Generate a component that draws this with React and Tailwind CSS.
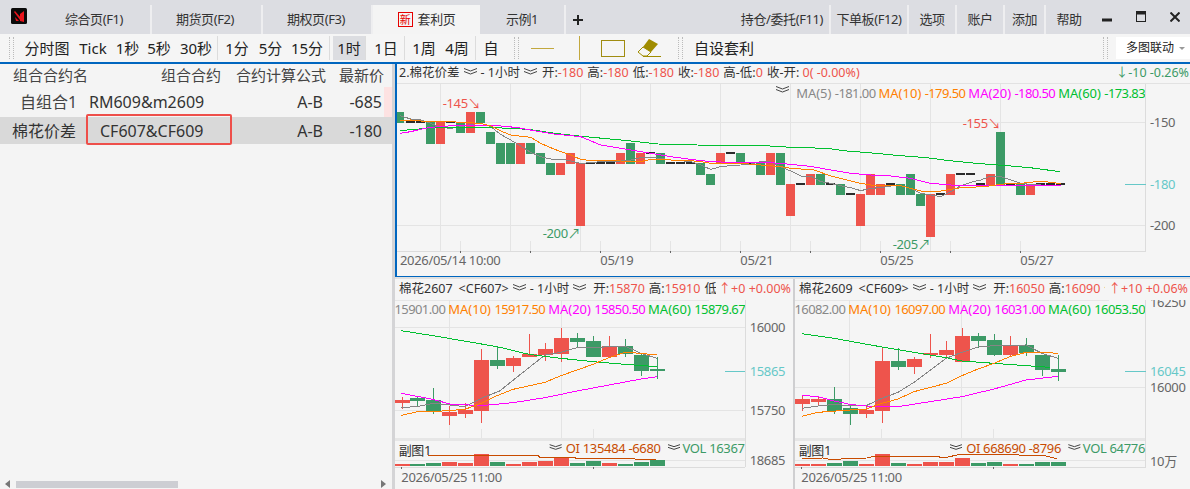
const RED = "#ee544c";
const GREEN = "#3c9a66";
const DASH = "#2b2b2b";
const GRID = "#e4e4e4";
const ORANGE = "#ff8000";
const MAGENTA = "#ff00ff";
const LIME = "#00c030";

const TABS = [
  { t: "综合页(F1)", w: "w-[111px] pr-[3px]" },
  { t: "期货页(F2)", w: "w-[111px] pr-[3px]" },
  { t: "期权页(F3)", w: "w-[110px] pr-[2px]" },
];
const MENU = [
  { t: "持仓/委托(F11)", w: "w-[96px]" },
  { t: "下单板(F12)", w: "w-[78px]" },
  { t: "选项", w: "w-[48px]" },
  { t: "账户", w: "w-[48px]" },
  { t: "添加", w: "w-[41px]" },
];
const PERIODS = [
  { t: "分时图", w: "w-[54px]" },
  { t: "Tick", w: "w-[38px]" },
  { t: "1秒", w: "w-[31px]" },
  { t: "5秒", w: "w-[32px]" },
  { t: "30秒", w: "w-[42px]" },
  null,
  { t: "1分", w: "w-[38px]" },
  { t: "5分", w: "w-[29px]" },
  { t: "15分", w: "w-[44px]" },
  null,
  { t: "1时", w: "w-[32px] ml-[3px] bg-[#dcdde1]" },
  null,
  { t: "1日", w: "w-[36px] ml-[2px]" },
  null,
  { t: "1周", w: "w-[34px] ml-[2px]" },
  { t: "4周", w: "w-[32px]" },
  { t: "", w: "w-[2px]" },
  null,
  { t: "自", w: "w-[30px]" },
];

// main chart, coordinates are 3x page px, [x, top, bottom, colour]
const k = (x, a, b, c) => [x, a, b, c];
const dash = (x, y) => [x, y - 3, y + 3, DASH];
const s = 1185;
const MAIN_BARS = [
  k(15, 51, 83, GREEN), dash(47, 80), dash(77, 80), k(107, 82, 147, GREEN), k(137, 82, 147, RED), dash(167, 80),
  k(197, 82, 113, GREEN), k(227, 51, 113, RED), k(257, 51, 84, GREEN), k(287, 111, 147, GREEN), k(317, 144, 207, GREEN),
  k(347, 144, 207, GREEN), k(377, 144, 207, RED), k(407, 144, 177, GREEN), k(437, 174, 207, GREEN), k(467, 204, 240, GREEN),
  k(497, 204, 240, RED), k(527, 174, 207, RED), k(557, 204, 393, RED), dash(587, 203), dash(617, 203), dash(647, 203),
  k(677, 174, 207, RED), k(707, 144, 207, GREEN), k(737, 174, 207, RED), dash(767, 173), k(797, 174, 207, GREEN),
  dash(827, 203), dash(857, 203), dash(887, 203), k(917, 204, 240, GREEN), k(947, 237, 270, GREEN), k(977, 174, 207, RED),
  dash(1007, 173), k(1037, 174, 207, GREEN), dash(1067, 203), k(1097, 204, 240, GREEN), k(1127, 174, 240, RED),
  k(1157, 174, 270, GREEN), k(s + 2, 267, 363, RED), dash(s + 32, 267), k(s + 62, 237, 270, RED), k(s + 92, 237, 270, GREEN),
  dash(s + 122, 267), k(s + 152, 267, 300, GREEN), dash(s + 182, 297), k(s + 212, 297, 393, RED), k(s + 242, 237, 300, RED),
  k(s + 272, 267, 300, RED), dash(s + 302, 267), k(s + 332, 267, 300, GREEN), k(s + 362, 237, 300, GREEN),
  k(s + 392, 297, 333, GREEN), k(s + 422, 297, 426, RED), dash(s + 452, 297), k(s + 482, 237, 300, RED), dash(s + 512, 237),
  dash(s + 542, 237), dash(s + 572, 267), k(s + 602, 237, 270, RED), k(s + 632, 111, 270, GREEN), dash(s + 662, 267),
  k(s + 692, 267, 300, GREEN), k(s + 722, 267, 300, RED), dash(s + 752, 267), dash(s + 782, 267), dash(s + 812, 267),
];
const join = (a, b) =>
  a.map((p) => p.join(",")).concat(b.map((p) => `${p[0] + s},${p[1]}`)).join(" ");
const MAIN_GRAY = join(
  [[15,62],[47,72],[77,75],[107,85],[137,97],[167,100],[197,95],[227,88],[257,85],[287,95],[317,118],[347,135],[377,153],[407,172],[437,185],[467,192],[497,192],[527,198],[557,205],[587,203],[617,200],[647,200],[677,198],[707,195],[737,188],[767,187],[797,190],[827,195],[857,197],[887,200],[917,210],[947,223],[977,215],[1007,212],[1037,210],[1067,207],[1097,200],[1127,200],[1157,215]],
  [[2,228],[32,243],[62,243],[92,260],[122,265],[152,272],[182,278],[212,287],[242,280],[272,278],[302,273],[332,272],[362,280],[392,295],[422,300],[452,305],[482,290],[512,272],[542,262],[572,255],[602,243],[632,245],[662,255],[692,265],[722,268],[752,270],[782,272],[812,272]]
);
const MAIN_ORANGE = join(
  [[15,78],[47,75],[77,78],[137,78],[197,82],[257,85],[287,93],[317,108],[347,120],[407,127],[437,145],[467,158],[497,170],[527,180],[557,193],[587,197],[677,198],[737,200],[767,193],[827,195],[887,197],[917,200],[947,205],[1037,205],[1097,210],[1157,215]],
  [[2,220],[32,222],[62,222],[92,232],[122,243],[152,250],[182,258],[212,265],[242,270],[302,272],[332,272],[362,280],[392,288],[452,288],[512,278],[582,275],[632,268],[662,265],[692,265],[722,262],[752,258],[782,262],[812,266]]
);
const MAIN_MAGENTA = join(
  [[15,115],[47,110],[77,103],[107,97],[197,90],[287,90],[370,98],[417,107],[477,117],[557,125],[617,150],[707,165],[767,175],[827,185],[887,193],[947,200],[1037,203],[1127,203]],
  [[2,208],[62,214],[122,225],[182,235],[242,240],[302,243],[362,250],[422,265],[482,270],[572,270],[632,270],[692,272],[752,272],[812,272]]
);
const MAIN_LIME = join(
  [[15,106],[60,104],[100,98],[280,97],[400,103],[480,115],[570,125],[700,137],[790,147],[905,150],[1110,152]],
  [[2,157],[110,160],[170,168],[260,175],[320,181],[410,188],[470,196],[560,205],[650,212],[720,218],[780,226],[810,230]]
);

// sub charts: [x, bodyTop, bodyBottom, wickTop, wickBottom, colour, volumeTop]
const LEFT_CHART = {
  bars: [
    [28,375,383,365,402,RED,567],[72,370,378,362,393,GREEN,568],[120,376,412,340,417,GREEN,565],[168,412,422,393,450,RED,561],
    [216,405,416,385,428,RED,564],[264,255,407,222,443,RED,537],[312,256,272,217,282,GREEN,561],[360,250,272,243,290,RED,567],
    [408,237,245,177,245,RED,561],[456,222,240,204,258,RED,558],[504,189,237,160,260,RED,546],[552,189,201,175,215,GREEN,564],
    [600,198,245,183,245,GREEN,558],[648,213,245,183,245,RED,564],[696,213,237,192,245,GREEN,567],[744,240,287,235,303,GREEN,561],
    [792,283,287,245,311,GREEN,555],
  ],
  gray: "25,398 75,394 120,385 170,390 216,395 264,370 320,348 380,300 456,240 504,232 552,218 600,218 648,215 696,213 744,235 792,250",
  orange: "25,421 70,411 120,410 216,403 264,385 312,362 360,343 456,322 504,302 552,285 600,268 648,248 696,232 744,235 792,240",
  magenta: "25,355 120,373 170,387 264,392 360,383 456,368 552,348 648,330 744,312 792,305",
  lime: "25,167 120,182 312,215 408,238 504,250 600,260 696,268 792,275",
  oi: "100,540 240,541 290,541 435,541 440,547 600,550 720,551 730,553 790,553",
  box: 1057,
  vx: [170, 505],
  tx: [265, 600],
  hy: [156, 405],
  ticks: [25, 600],
  last: { y: 289, from: 996, text: "15865" },
  labels: [["16000", 156], ["15750", 406], ["18685", 556]],
  labelX: 1070,
};
const RIGHT_CHART = {
  bars: [
    [36,372,386,360,408,RED,567],[84,372,381,365,390,RED,567],[132,372,408,336,417,GREEN,564],[180,399,416,390,450,GREEN,558],
    [228,405,416,390,429,RED,567],[276,258,408,218,444,RED,537],[324,258,276,220,285,GREEN,564],[372,252,276,246,297,RED,567],
    [420,234,240,177,248,RED,561],[468,225,240,198,252,RED,561],[516,183,260,159,260,RED,549],[564,183,198,174,220,GREEN,564],
    [612,195,240,177,242,GREEN,561],[660,210,240,183,242,RED,567],[708,210,234,189,242,GREEN,567],[756,240,285,240,303,GREEN,561],
    [804,281,290,240,318,GREEN,561],
  ],
  gray: "36,400 84,393 132,388 180,392 228,392 276,370 324,352 372,322 468,250 516,232 564,216 612,212 708,210 756,235 804,250",
  orange: "36,424 84,412 180,405 228,402 276,385 324,372 372,350 468,325 516,302 564,282 612,265 660,245 708,232 756,232 804,235",
  magenta: "36,361 84,365 132,378 180,388 228,393 324,395 420,380 516,365 612,342 708,315 804,304",
  lime: "36,176 132,190 276,216 372,232 468,248 516,258 612,265 708,272 780,277",
  oi: "36,550 100,549 130,555 170,550 230,549 250,544 300,544 440,545 465,548 510,538 540,538 760,541 800,551",
  box: 1067,
  vx: [178, 514],
  tx: [275, 610],
  hy: [337],
  ticks: [34, 610],
  last: { y: 289, from: 1005, text: "16045" },
  labels: [["16250", 81], ["16000", 338], ["10万", 558]],
  labelX: 1080,
};

function Grip({ className = "" }) {
  return <div className={`w-[5px] h-[22px] shrink-0 border-x border-dotted border-[#bbb] ${className}`} />;
}

function Sep() {
  return <div className="w-px h-[24px] bg-[#dcdcdc] shrink-0" />;
}

function Chev() {
  return (
    <svg width="13" height="7" viewBox="0 0 13 7" className="inline-block shrink-0 mb-[4px]" fill="none" stroke="#444" strokeWidth="1">
      <path d="M0 0.5 L6.5 3 L13 0.5" />
      <path d="M0 3.5 L6.5 6 L13 3.5" />
    </svg>
  );
}

function Logo() {
  return (
    <svg width="16" height="16" viewBox="0 0 16 16" className="shrink-0">
      <rect width="16" height="16" rx="1.5" fill="#0a0a0a" />
      <path d="M9 13 V6 L13 3 V14 Z" fill="#e8141c" />
      <path d="M3 4 L4 3 L11 11 L9 12 Z" fill="#e8141c" />
      <path d="M4 9 L8 13 H5 Z" fill="#e8141c" />
    </svg>
  );
}

function TabBar() {
  return (
    <div className="flex h-[34px] shrink-0 bg-[#dcdde2] text-[13px] text-[#333] items-end tracking-[-0.4px]">
      <div className="w-[41px] h-full shrink-0 pl-[11px] pt-[8px]">
        <Logo />
      </div>
      {TABS.map((tab) => (
        <div key={tab.t} className={`${tab.w} h-[29px] flex items-center justify-center border-r-2 border-[#eeeef0]`}>
          {tab.t}
        </div>
      ))}
      <div className="w-[107px] h-[29px] bg-[#f4f4f4] flex items-center justify-center gap-[5px]">
        <span className="w-[15px] h-[15px] border border-[#e60000] text-[#e60000] text-[11px] leading-[13px] text-center">新</span>
        <span>套利页</span>
      </div>
      <div className="w-[86px] h-[29px] flex items-center justify-center border-r-2 border-[#eeeef0]">示例1</div>
      <div className="w-[24px] h-[29px] flex items-center justify-center">
        <svg width="12" height="12" viewBox="0 0 12 12" fill="#222">
          <rect x="5" y="1" width="2" height="10" />
          <rect x="1" y="5" width="10" height="2" />
        </svg>
      </div>
      <div className="ml-auto flex">
        {MENU.map((m) => (
          <div key={m.t} className={`${m.w} h-[29px] flex items-center justify-center border-r-2 border-[#eeeef0]`}>
            {m.t}
          </div>
        ))}
        <div className="w-[46px] h-[29px] flex items-center justify-center">帮助</div>
        <div className="w-[30px] h-[29px] flex items-center justify-center">
          <svg width="10" height="4" viewBox="0 0 10 4"><rect y="0.5" width="10" height="3" fill="#222" /></svg>
        </div>
        <div className="w-[38px] h-[29px] flex items-center justify-center pb-[6px]">
          <svg width="10" height="11" viewBox="0 0 10 11" fill="none" stroke="#222">
            <rect x="0.5" y="0.5" width="9" height="10" />
            <rect x="0.5" y="1" width="9" height="2" fill="#222" />
          </svg>
        </div>
        <div className="w-[30px] h-[29px] flex items-center justify-center pb-[6px]">
          <svg width="10" height="10" viewBox="0 0 10 10" stroke="#222" strokeWidth="2">
            <path d="M0.5 0.5 L9.5 9.5 M9.5 0.5 L0.5 9.5" />
          </svg>
        </div>
      </div>
    </div>
  );
}

function Toolbar() {
  return (
    <div className="flex items-center h-[30px] shrink-0 bg-[#f5f5f5] border-b-2 border-[#0066bf] text-[15px] text-[#222] pl-[9px]">
      <Grip className="mr-[6px]" />
      {PERIODS.map((p, i) =>
        p ? (
          <div key={i} className={`${p.w} h-[24px] shrink-0 flex items-center justify-center`}>
            {p.t}
          </div>
        ) : (
          <Sep key={i} />
        )
      )}
      <Grip className="ml-[8px]" />
      <div className="w-[23px] h-px bg-[#c2a83e] ml-[12px] shrink-0" />
      <div className="w-px h-[24px] bg-[#c2a83e] ml-[25px] shrink-0" />
      <div className="w-[24px] h-[17px] border border-[#a08c10] ml-[21px] shrink-0" />
      <svg width="24" height="20" viewBox="0 0 24 20" className="ml-[12px] shrink-0" fill="none">
        <path d="M12 1 L21 6 L14 14 L6 9 Z" fill="#a08c00" />
        <path d="M6 9 L14 14 L10 18 H6 L1 14 Z" stroke="#a08c00" />
        <path d="M6 18.5 H24" stroke="#a08c00" />
      </svg>
      <Grip className="ml-[17px]" />
      <div className="ml-[11px] shrink-0">自设套利</div>
      <Grip className="ml-auto mr-[8px]" />
      <div className="w-[74px] h-[22px] bg-white flex items-center pl-[10px] gap-[5px] text-[12px] shrink-0">
        <span>多图联动</span>
        <span className="w-0 h-0 border-x-[3px] border-t-[3px] border-x-transparent border-t-[#999]" />
      </div>
    </div>
  );
}

function ContractTable() {
  return (
    <div className="w-[392px] shrink-0 bg-[#f4f4f4] flex flex-col text-[#333] relative">
      <div className="grid grid-cols-[89px_132px_105px_58px_8px] h-[23px] text-[15px] items-center text-[#444]">
        <div className="pl-[13px] whitespace-nowrap">组合合约名</div>
        <div className="text-right">组合合约</div>
        <div className="text-right">合约计算公式</div>
        <div className="text-right">最新价</div>
      </div>
      <div className="grid grid-cols-[89px_132px_105px_58px_8px] h-[30px] text-[16px] items-center">
        <div className="text-center pl-[8px] text-[#444] whitespace-nowrap">自组合1</div>
        <div className="whitespace-nowrap">RM609&amp;m2609</div>
        <div className="text-right pr-[3px]">A-B</div>
        <div className="text-right pr-[2px]">-685</div>
        <div className="h-full bg-[#fde2e2]" />
      </div>
      <div className="grid grid-cols-[89px_132px_105px_58px_8px] h-[27px] text-[16px] items-center bg-[#d9d9d9]">
        <div className="pl-[12px] whitespace-nowrap">棉花价差</div>
        <div className="pl-[11px] whitespace-nowrap">CF607&amp;CF609</div>
        <div className="text-right pr-[3px]">A-B</div>
        <div className="text-right pr-[2px]">-180</div>
      </div>
      <div className="absolute left-[86px] top-[50px] w-[146px] h-[31px] border-2 border-[#ee4f4a] rounded-[2px]" />
      <div className="mt-auto h-[9px] flex items-center pl-[5px] pb-[1px]">
        <span className="w-0 h-0 border-y-[4px] border-r-[5px] border-y-transparent border-r-[#777]" />
        <div className="w-[162px] h-[7px] bg-[#cdced3] ml-[6px]" />
        <span className="w-0 h-0 border-y-[4px] border-l-[5px] border-y-transparent border-l-[#777] ml-[203px]" />
      </div>
    </div>
  );
}

function MaLegend({ items, className = "" }) {
  return (
    <div className={`absolute flex gap-[3px] whitespace-nowrap text-[13px] justify-end overflow-hidden ${className}`}>
      {items.map(([label, value, color]) => (
        <span key={value} className={color}>
          {label} <span className="tracking-[-0.6px]">{value}</span>
        </span>
      ))}
    </div>
  );
}

function MainChart() {
  return (
    <div className="h-[213px] border-l-2 border-b border-[#0066bf] flex flex-col bg-[#f5f5f5] text-[#333]">
      <div className="h-[20px] shrink-0 flex items-center gap-[4px] pl-[2px] text-[12.5px] whitespace-nowrap border-b border-[#e2e2e2]">
        <span>2.棉花价差</span>
        <Chev />
        <span>- 1小时</span>
        <Chev />
        <span className="ml-[1px]">开:<span className="text-[#ee544c]">-180</span></span>
        <span>高:<span className="text-[#ee544c]">-180</span></span>
        <span>低:<span className="text-[#ee544c]">-180</span></span>
        <span>收:<span className="text-[#ee544c]">-180</span></span>
        <span>高-低:<span className="text-[#ee544c]">0</span></span>
        <span>收-开: <span className="text-[#ee544c]">0( -0.00%)</span></span>
        <span className="ml-auto pr-[1px] text-[#3c9a66]">↓-10 -0.26%</span>
      </div>
      <div className="relative flex-1 min-h-0">
        <svg viewBox="6 -33 2379 576" className="block w-full h-full" shapeRendering="crispEdges">
          {[135, 345, 555, 765, 975, 1185, 1395, 1605, 1815].map((x) => (
            <line key={x} x1={x} x2={x} y1={-33} y2={468} stroke={GRID} strokeWidth="3" />
          ))}
          {[82, 391].map((y) => (
            <line key={y} x1={6} x2={2252} y1={y} y2={y} stroke={GRID} strokeWidth="3" />
          ))}
          <line x1={6} x2={2252} y1={468} y2={468} stroke="#dcdcdc" strokeWidth="3" />
          <line x1={2252} x2={2252} y1={-33} y2={468} stroke="#dcdcdc" strokeWidth="3" />
          {[196, 406, 616, 826, 1036, 1247, 1456, 1666, 1876].map((x) => (
            <g key={x}>
              <line x1={x} x2={x} y1={437} y2={468} stroke={GRID} strokeWidth="3" />
              <line x1={x} x2={x} y1={468} y2={475} stroke="#666" strokeWidth="3" />
            </g>
          ))}
          <line x1={2190} x2={2252} y1={268} y2={268} stroke="#66c8c8" strokeWidth="3" />
          {MAIN_BARS.map(([x, a, b, c]) => (
            <rect key={x} x={x - 14} y={a} width={27} height={b - a} fill={c} />
          ))}
          <polyline points={MAIN_GRAY} fill="none" stroke="#858585" strokeWidth="3" />
          <polyline points={MAIN_LIME} fill="none" stroke={LIME} strokeWidth="3" />
          <polyline points={MAIN_MAGENTA} fill="none" stroke={MAGENTA} strokeWidth="3" />
          <polyline points={MAIN_ORANGE} fill="none" stroke={ORANGE} strokeWidth="3" />
          <g fontSize="39" shapeRendering="auto" letterSpacing="-1">
            <text x="143" y="39" fill={RED}>-145↘</text>
            <text x="443" y="428" fill={GREEN}>-200↗</text>
            <text x="1703" y="98" fill={RED}>-155↘</text>
            <text x="1493" y="461" fill={GREEN}>-205↗</text>
            <g fill="#666">
              <text x="15" y="510">2026/05/14 10:00</text>
              <text x="616" y="510">05/19</text>
              <text x="1036" y="510">05/21</text>
              <text x="1456" y="510">05/25</text>
              <text x="1876" y="510">05/27</text>
              <text x="2265" y="96">-150</text>
              <text x="2265" y="405">-200</text>
            </g>
            <text x="2265" y="282" fill="#66c8c8">-180</text>
          </g>
        </svg>
        <div className="absolute left-[379px] top-[2px] flex items-center gap-[2px]">
          <Chev />
        </div>
        <MaLegend
          className="right-[45px] top-0 w-[355px]"
          items={[
            ["MA(5)", "-181.00", "text-[#888]"],
            ["MA(10)", "-179.50", "text-[#ff8000]"],
            ["MA(20)", "-180.50", "text-[#ff00ff]"],
            ["MA(60)", "-173.83", "text-[#00c030]"],
          ]}
        />
      </div>
    </div>
  );
}

function SubSvg({ data, viewBox, date, oi, vol }) {
  const { bars, box } = data;
  const chev = (x) => `M${x} 509 L${x + 18} 515 L${x + 36} 509 M${x} 517 L${x + 18} 523 L${x + 36} 517`;
  return (
    <svg viewBox={viewBox} className="block w-full h-full" shapeRendering="crispEdges">
      <line x1={0} x2={box - 110} y1={76} y2={76} stroke="#e6e6e6" strokeWidth="3" />
      {data.vx.map((x) => (
        <line key={x} x1={x} x2={x} y1={75} y2={490} stroke={GRID} strokeWidth="3" />
      ))}
      {data.tx.map((x) => (
        <line key={x} x1={x} x2={x} y1={462} y2={490} stroke={GRID} strokeWidth="3" />
      ))}
      {data.hy.map((y) => (
        <line key={y} x1={0} x2={box} y1={y} y2={y} stroke={GRID} strokeWidth="3" />
      ))}
      <line x1={0} x2={box} y1={493} y2={493} stroke="#e6e6e6" strokeWidth="9" />
      <line x1={0} x2={box} y1={555} y2={555} stroke={GRID} strokeWidth="3" />
      <line x1={0} x2={box} y1={576} y2={576} stroke="#dcdcdc" strokeWidth="3" />
      <line x1={box} x2={box} y1={75} y2={576} stroke="#dcdcdc" strokeWidth="3" />
      {data.ticks.map((x) => (
        <line key={x} x1={x} x2={x} y1={576} y2={583} stroke="#666" strokeWidth="3" />
      ))}
      <line x1={data.last.from} x2={box} y1={data.last.y} y2={data.last.y} stroke="#66c8c8" strokeWidth="3" />
      {bars.map(([x, a, b, wa, wb, c, v]) => (
        <g key={x} fill={c}>
          <rect x={x - 1.5} y={wa} width={3} height={wb - wa} />
          <rect x={x - 22} y={a} width={45} height={Math.max(b - a, 3)} />
          <rect x={x - 22} y={v} width={45} height={573 - v} />
        </g>
      ))}
      <polyline points={data.gray} fill="none" stroke="#858585" strokeWidth="3" />
      <polyline points={data.lime} fill="none" stroke={LIME} strokeWidth="3" />
      <polyline points={data.magenta} fill="none" stroke={MAGENTA} strokeWidth="3" />
      <polyline points={data.orange} fill="none" stroke={ORANGE} strokeWidth="3" />
      <polyline points={data.oi} fill="none" stroke="#c84b00" strokeWidth="3" />
      <path d={chev(box - 587)} fill="none" stroke="#444" strokeWidth="3" shapeRendering="auto" />
      <path d={chev(box - 232)} fill="none" stroke="#444" strokeWidth="3" shapeRendering="auto" />
      <g fontSize="39" shapeRendering="auto" fill="#666" letterSpacing="-1">
        {data.labels.map(([t, y]) => (
          <text key={t} x={data.labelX} y={y + 14}>{t}</text>
        ))}
        <text x={data.labelX} y={data.last.y + 14} fill="#66c8c8">{data.last.text}</text>
        <text x={data.ticks[0]} y={620}>{date}</text>
        <text x={data.ticks[0] - 8} y={540} fill="#333">副图1</text>
        <text x={box - 2} y={534} textAnchor="end" fill={GREEN}>{vol}</text>
        <text x={box - 254} y={534} textAnchor="end" fill="#c84b00">{oi}</text>
      </g>
    </svg>
  );
}

function SubChart({ title, code, open, high, chg, pct, data, viewBox, ma, date, oi, vol, className }) {
  return (
    <div className={`flex flex-col min-w-0 bg-[#f5f5f5] text-[#333] ${className}`}>
      <div className="h-[21px] shrink-0 flex items-center gap-[4px] pl-[4px] text-[12.5px] whitespace-nowrap overflow-hidden relative">
        <span>{title}</span>
        <span className="ml-[2px]">{code}</span>
        <Chev />
        <span>- 1小时</span>
        <Chev />
        <span className="ml-[3px]">开:<span className="text-[#ee544c]">{open}</span></span>
        <span>高:<span className="text-[#ee544c]">{high}</span></span>
        <span>低</span>
        <span className="absolute right-0 top-0 h-full pl-[3px] pr-[2px] bg-[#f5f5f5] flex items-center text-[#ee544c]">
          ↑{chg} {pct}
        </span>
      </div>
      <div className="relative flex-1 min-h-0">
        <SubSvg data={data} viewBox={viewBox} date={date} oi={oi} vol={vol} />
        <MaLegend className="left-0 top-0 w-[350px]" items={ma} />
      </div>
    </div>
  );
}

export default function App() {
  return (
    <div className="w-[1190px] h-[489px] overflow-hidden flex flex-col bg-[#f5f5f5] font-['Noto_Sans','Noto_Sans_CJK_SC',sans-serif]">
      <TabBar />
      <Toolbar />
      <div className="flex flex-1 min-h-0">
        <ContractTable />
        <div className="w-[3px] shrink-0 bg-[#d4d4d6]" />
        <div className="flex-1 min-w-0 flex flex-col">
          <MainChart />
          <div className="h-[2px] shrink-0 bg-[#e0e0e0]" />
          <div className="flex flex-1 min-h-0">
            <SubChart
              className="w-[398px] shrink-0"
              title="棉花2607"
              code="<CF607>"
              open="15870"
              high="15910"
              chg="+0"
              pct="+0.00%"
              data={LEFT_CHART}
              viewBox="6 75 1194 567"
              date="2026/05/25 11:00"
              oi="OI 135484  -6680"
              vol="VOL 16367"
              ma={[
                ["", "15901.00", "text-[#888]"],
                ["MA(10)", "15917.50", "text-[#ff8000]"],
                ["MA(20)", "15850.50", "text-[#ff00ff]"],
                ["MA(60)", "15879.67", "text-[#00c030]"],
              ]}
            />
            <div className="w-[2px] shrink-0 bg-[#cfcfd1]" />
            <SubChart
              className="flex-1"
              title="棉花2609"
              code="<CF609>"
              open="16050"
              high="16090"
              chg="+10"
              pct="+0.06%"
              data={RIGHT_CHART}
              viewBox="15 75 1185 567"
              date="2026/05/25 11:00"
              oi="OI 668690  -8796"
              vol="VOL 64776"
              ma={[
                ["", "16082.00", "text-[#888]"],
                ["MA(10)", "16097.00", "text-[#ff8000]"],
                ["MA(20)", "16031.00", "text-[#ff00ff]"],
                ["MA(60)", "16053.50", "text-[#00c030]"],
              ]}
            />
          </div>
        </div>
      </div>
    </div>
  );
}
